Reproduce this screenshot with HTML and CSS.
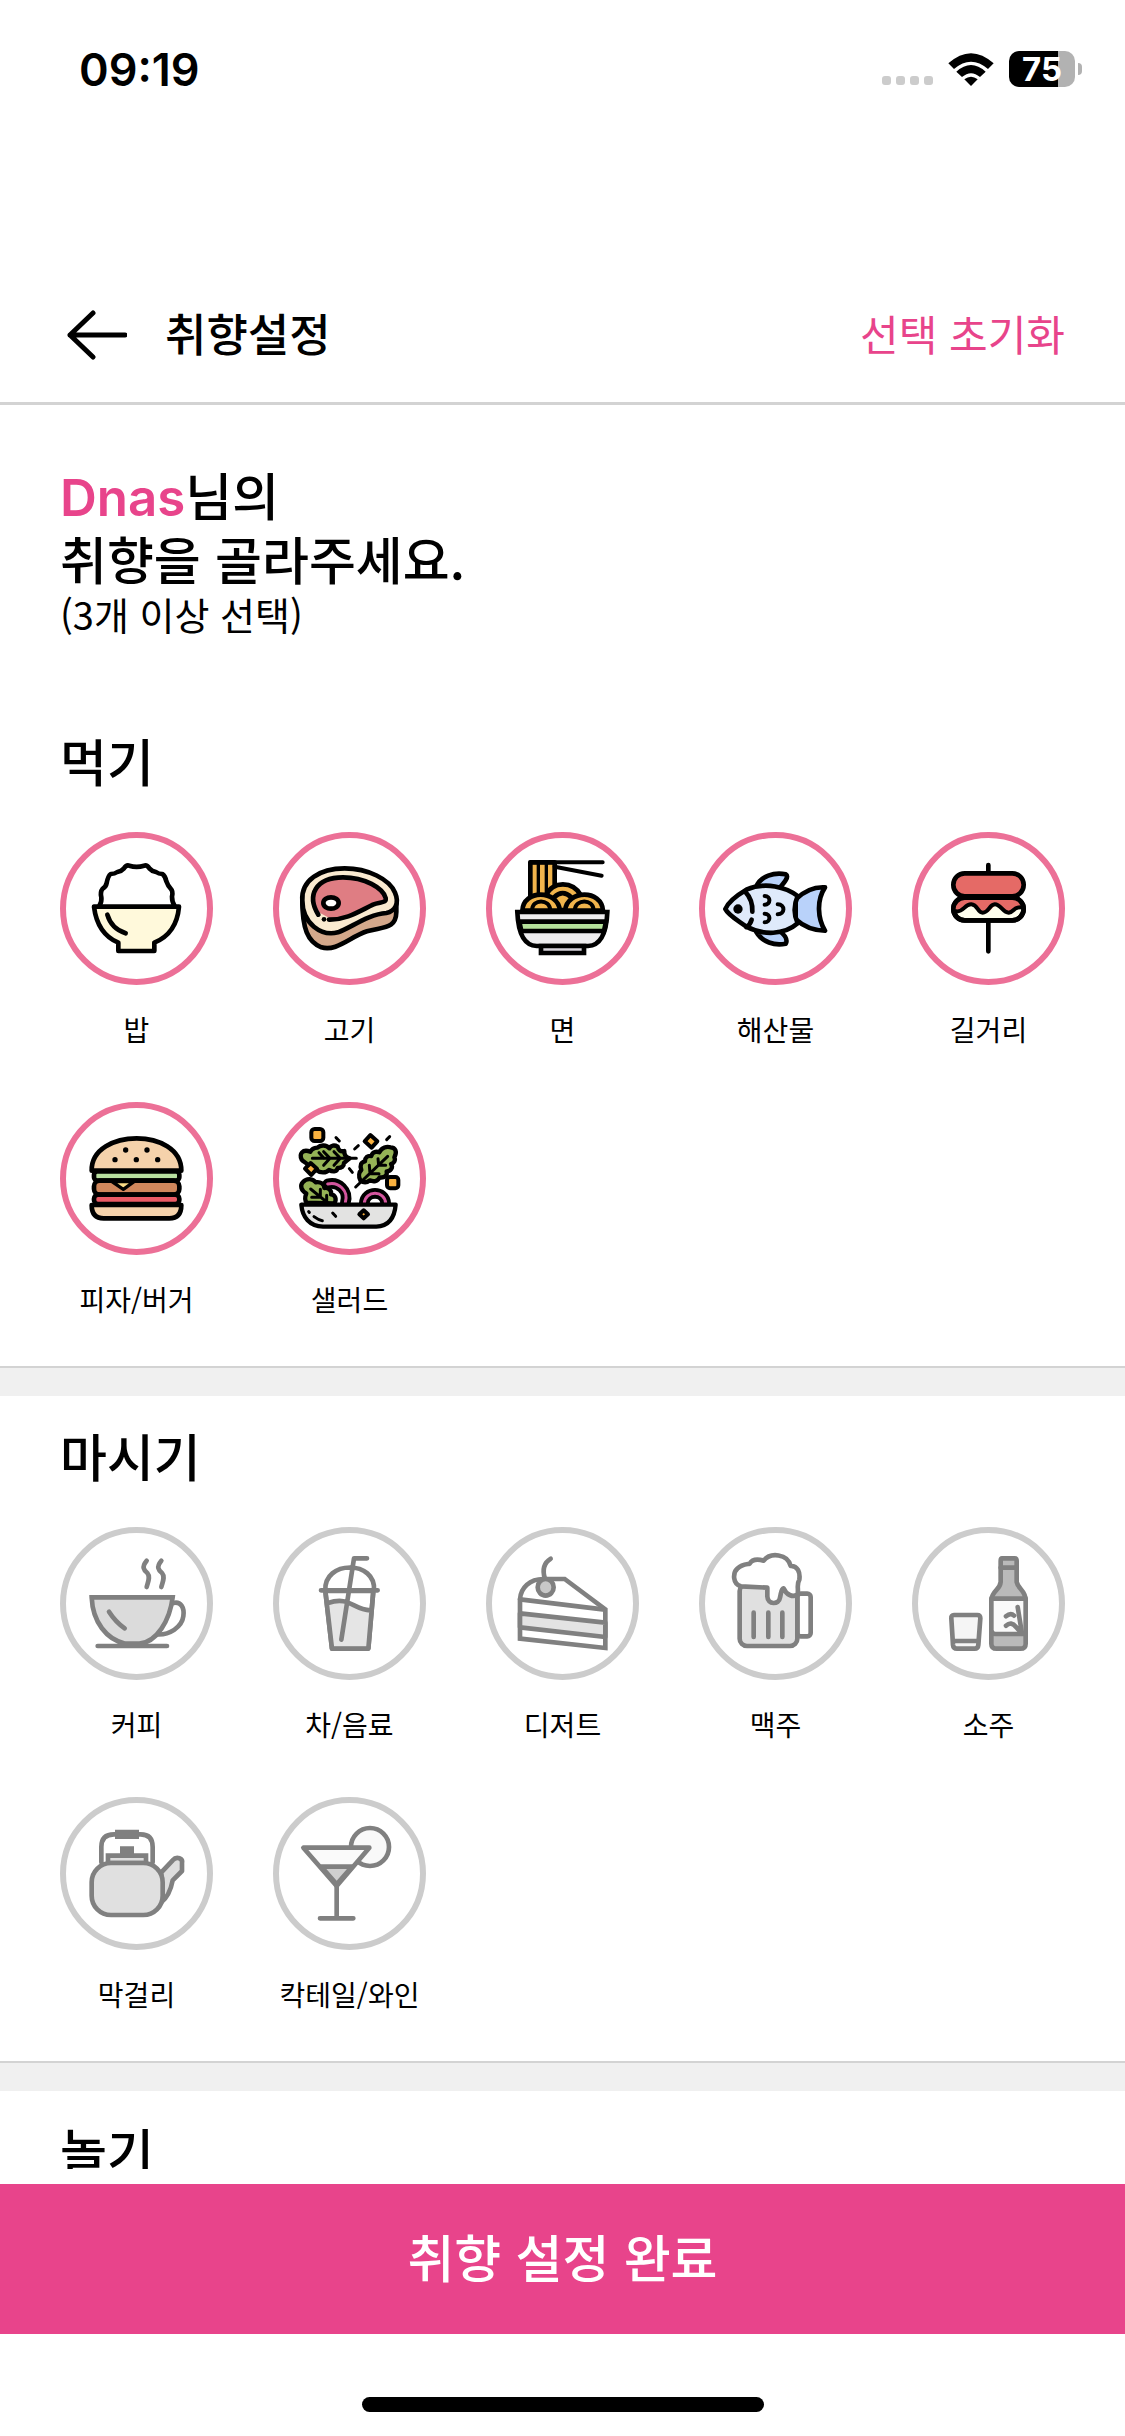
FILE: index.html
```
<!DOCTYPE html>
<html lang="ko">
<head>
  <meta charset="UTF-8">
  <meta name="viewport" content="width=device-width, initial-scale=1">
  <title>취향설정</title>
  <link rel="stylesheet" href="styles.css">
</head>
<body>

  <div class="status-bar">
    <span class="time">09:19</span>
    <div class="status-icons">
      <div class="signal"><i></i><i></i><i></i><i></i></div>
      <svg class="wifi" viewBox="0 0 138 99">
        <path d="M1 31 Q69 -30 137 31 L120 48 Q69 4 18 48 Z"/>
        <path d="M25 56 Q69 16 113 56 L96 72 Q69 49 42 72 Z"/>
        <path d="M49 79 Q69 63 89 79 L69 99 Z"/>
      </svg>
      <div class="battery"><span>75</span></div>
    </div>
  </div>

  <header class="header">
    <button class="back" type="button" aria-label="뒤로">
      <svg viewBox="0 0 60 50"><path d="M58 25H3M26 3L3 25l23 22"/></svg>
    </button>
    <h1>취향설정</h1>
    <button class="reset" type="button">선택 초기화</button>
  </header>

  <main class="content">
    <div class="intro">
      <h2><span class="nickname">Dnas</span>님의<br>취향을 골라주세요.</h2>
      <p>(3개 이상 선택)</p>
    </div>

    <section class="category">
      <h2>먹기</h2>
      <div class="items">
        <button class="item selected" type="button">
          <span class="ring">
            <svg viewBox="18 18 423 423">
              <path fill="#fff" d="M118 222Q126 208 124 196Q120 180 128 170Q138 164 140 153Q144 132 152 126Q164 126 172 120Q184 118 192 109Q199 98 208 101Q230 108 252 101Q261 98 268 109Q276 118 288 120Q296 126 307 126Q316 132 319 148Q324 162 332 170Q340 178 336 194Q336 210 344 222"/>
              <path fill="#fff9db" d="M102 224H357Q350 305 283 332V357H175V332Q112 305 102 224Z"/>
              <path fill="none" d="M142 248Q154 290 197 304"/>
            </svg>
          </span>
          <span class="label">밥</span>
        </button>
        <button class="item selected" type="button">
          <span class="ring">
            <svg viewBox="18 18 423 423">
              <path fill="#d4a88b" d="M88 205C88 290 104 330 145 346C190 360 230 315 282 298C330 284 369 292 370 240V205Z"/>
              <path fill="#faead0" d="M88 205C84 145 140 109 215 109C285 109 350 142 366 182C380 215 366 238 340 243C285 247 235 287 195 301C145 314 88 275 88 205Z"/>
              <path fill="#df7d83" stroke="none" d="M140 242C105 195 125 136 210 136C270 136 330 165 341 198C344 215 325 210 305 218C265 235 225 262 180 264Z"/>
              <path fill="none" d="M136 248C100 190 128 136 210 136C275 136 330 168 338 198C341 214 322 209 300 218C258 238 220 264 168 263"/>
              <ellipse cx="174" cy="213" rx="23" ry="17" fill="#fff"/>
              <circle class="solid" cx="153" cy="262" r="7"/>
            </svg>
          </span>
          <span class="label">고기</span>
        </button>
        <button class="item selected" type="button">
          <span class="ring">
            <svg viewBox="18 18 423 423">
              <path fill="#f1b44c" d="M133 91H206V200H133Z"/>
              <path fill="none" stroke-width="10" d="M157 91V200M181 91V200"/>
              <path fill="none" stroke-width="12" d="M133 91H350M206 104L347 131"/>
              <path fill="#f1b44c" d="M180 190C200 146 260 146 285 190L250 234H215Z"/>
              <path fill="none" d="M204 196Q230 170 256 196"/>
              <path fill="#f1b44c" d="M109 236C112 172 215 172 222 236ZM237 236C244 172 347 172 351 236Z"/>
              <path fill="none" stroke-width="12" d="M138 234C140 200 190 200 193 234M266 234C270 200 320 200 323 234"/>
              <path fill="#eeedef" stroke-linejoin="miter" d="M94 240H364Q360 340 306 342H152Q98 340 94 240Z"/>
              <path fill="#b4e19a" d="M100 269H360L354 297H106Z"/>
              <path fill="#d9d5dc" stroke-linejoin="miter" d="M165 342H294V363H165Z"/>
            </svg>
          </span>
          <span class="label">면</span>
        </button>
        <button class="item selected" type="button">
          <span class="ring">
            <svg viewBox="18 18 423 423">
              <path fill="#b9d2fa" d="M172 164C184 132 226 120 260 127C272 134 254 154 242 168ZM172 300C190 330 226 342 260 335C268 322 254 306 240 296ZM290 202C315 178 345 164 378 166C352 205 356 260 378 296C345 296 314 284 290 262Z"/>
              <path fill="#dfeafb" d="M79 231C88 208 120 186 142 173C200 148 262 166 296 192C284 220 284 248 296 274C255 310 192 310 142 284C118 266 88 250 79 231Z"/>
              <path fill="none" d="M138 178Q162 204 160 239M158 263Q154 278 142 285"/>
              <path fill="none" stroke-width="12" d="M197 192C216 192 216 218 197 218M236 217C260 217 258 247 236 247M197 245C216 245 216 271 197 271"/>
              <circle class="solid" cx="117" cy="231" r="14"/>
            </svg>
          </span>
          <span class="label">해산물</span>
        </button>
        <button class="item selected" type="button">
          <span class="ring">
            <svg viewBox="18 18 423 423">
              <path fill="none" d="M229 99V120M229 268V358"/>
              <rect x="124" y="124" width="211" height="69" rx="34" fill="#e56a66"/>
              <rect x="124" y="197" width="211" height="68" rx="34" fill="#fefeed"/>
              <path fill="#e56a66" stroke="none" d="M128 236C122 212 138 200 158 200H302C326 200 338 212 332 230C320 222 310 222 300 234Q285 252 266 228Q252 212 236 234Q222 252 200 228Q186 212 170 222Q154 236 132 238Z"/>
              <path fill="none" stroke-width="12" d="M132 238C154 242 158 216 178 217C198 218 196 242 212 242C230 242 232 218 248 217C266 216 272 242 290 242C308 240 304 222 332 226M146 197H312"/>
              <rect x="124" y="197" width="211" height="68" rx="34" fill="none"/>
            </svg>
          </span>
          <span class="label">길거리</span>
        </button>
        <button class="item selected" type="button">
          <span class="ring">
            <svg viewBox="18 18 423 423">
              <path fill="#f5d2ab" d="M95 206C94 140 165 109 230 109C295 109 364 140 364 206Z"/>
              <rect x="102" y="208" width="256" height="28" rx="10" fill="#b8e0a0"/>
              <rect x="102" y="236" width="256" height="42" rx="17" fill="#d0875c"/>
              <path fill="#fadb86" stroke-width="10" d="M156 239H222L190 262Z"/>
              <rect x="102" y="278" width="256" height="28" rx="12" fill="#ea5a65"/>
              <path fill="#f5d2ab" d="M95 309H364Q364 349 328 349H131Q95 349 95 309Z"/>
              <g class="solid"><circle cx="197" cy="144" r="8"/><circle cx="261" cy="144" r="8"/><circle cx="165" cy="173" r="8"/><circle cx="229" cy="173" r="8"/><circle cx="293" cy="173" r="8"/></g>
            </svg>
          </span>
          <span class="label">피자/버거</span>
        </button>
        <button class="item selected" type="button">
          <span class="ring">
            <svg viewBox="18 18 423 423">
              <g stroke-width="13">
                <path fill="#95b356" d="M230 169C218 166 213 158 214 147C202 150 196 144 194 134C184 128 174 130 169 139C160 128 143 128 133 137C122 138 116 141 112 149C88 140 78 156 86 173C92 181 106 184 104 192C112 204 122 204 130 204C142 214 160 213 168 204C182 212 192 208 194 198C206 199 213 192 213 183C219 178 224 174 230 169Z"/>
                <path fill="none" stroke-width="9" d="M118 169H250M152 149L171 169L152 190M183 149L202 169L183 190M138 152L153 169"/>
                <path fill="#95b356" d="M262 235C256 223 258 210 265 204C260 190 264 180 276 178C276 166 284 160 295 162C298 150 308 147 319 151C326 136 342 132 352 136C368 136 373 150 364 166C369 176 362 183 354 186C362 197 352 208 341 208C344 222 334 228 320 226C315 239 301 240 290 235C281 243 273 244 262 235Z"/>
                <path fill="none" stroke-width="9" d="M248 255L344 163M315 170L317 190H338M289 190L291 215H318"/>
                <path fill="none" stroke-width="32" d="M164 246C196 238 228 265 217 302M274 304C276 264 336 264 338 304"/>
                <path fill="none" stroke="#d4559e" stroke-width="9" d="M164 246C196 238 228 265 217 302M274 304C276 264 336 264 338 304"/>
                <path fill="#95b356" d="M101 302C94 294 96 284 100 274C84 266 80 250 90 240C102 227 120 230 128 241C142 238 154 246 154 258C168 256 177 267 174 277C187 278 192 292 184 304Z"/>
                <path fill="none" stroke-width="9" d="M113 261L166 304M142 262V286H116M161 280V300"/>
                <path fill="#e3e3e2" d="M85 308H368C364 355 342 373 310 374H150C110 373 88 346 85 308Z"/>
              </g>
              <g fill="#f9b13f" stroke-width="12">
                <rect x="115" y="81" width="36" height="36" rx="10"/>
                <path d="M292 99L313 118L296 137L275 118ZM113 183L132 200L115 219L96 200Z"/>
                <rect x="342" y="225" width="34" height="34" rx="9"/>
                <path d="M272 325L285 337L272 349L259 337Z"/>
              </g>
              <path fill="none" stroke-width="9" d="M189 107L199 117M245 141L256 131M229 200L238 211M341 113L350 104M179 333L188 343M107 329L109 331M123 344Q136 354 148 356"/>
            </svg>
          </span>
          <span class="label">샐러드</span>
        </button>
      </div>
    </section>

    <section class="category">
      <h2>마시기</h2>
      <div class="items">
        <button class="item" type="button">
          <span class="ring">
            <svg viewBox="18 18 423 423">
              <path fill="none" d="M340 228C362 222 374 242 370 268C366 300 328 326 288 322"/>
              <path fill="#dbdbdb" stroke-linejoin="miter" d="M95 211H338C330 280 290 346 238 350H196C140 338 98 285 95 211Z"/>
              <path fill="none" d="M113 357H321M147 254Q166 284 194 304M260 101C244 120 252 130 262 138C272 150 264 164 260 180M304 101C288 120 296 130 306 138C316 150 308 164 304 180"/>
            </svg>
          </span>
          <span class="label">커피</span>
        </button>
        <button class="item" type="button">
          <span class="ring">
            <svg viewBox="18 18 423 423">
              <path fill="#fff" d="M157 192H301L286 365H177Z"/>
              <path fill="#e5e5e5" stroke="none" d="M166 232C210 210 240 250 292 250L282 359H181Z"/>
              <path fill="none" d="M157 192C150 98 312 98 303 192M144 190H314M165 228C230 206 240 248 292 250M157 192L177 365H286L301 192M205 338L243 94H282"/>
            </svg>
          </span>
          <span class="label">차/음료</span>
        </button>
        <button class="item" type="button">
          <span class="ring">
            <svg viewBox="18 18 423 423">
              <path fill="#fff" stroke-linejoin="miter" d="M102 217C104 182 132 156 172 156H236L358 247V363L102 335Z"/>
              <path fill="#e3e3e3" d="M102 259L358 287V330L102 301Z"/>
              <path fill="none" d="M102 217L350 247M194 95C166 112 172 140 177 156"/>
              <ellipse cx="179" cy="181" rx="24" ry="25" fill="#c8c8c8"/>
            </svg>
          </span>
          <span class="label">디저트</span>
        </button>
        <button class="item" type="button">
          <span class="ring">
            <svg viewBox="18 18 423 423">
              <rect x="295" y="200" width="40" height="128" rx="10" fill="#fff"/>
              <rect x="122" y="170" width="173" height="187" rx="22" fill="#e0e0e0"/>
              <path fill="#fff" d="M126 178C101 172 100 138 116 124C128 112 142 112 152 110C160 96 176 96 194 101C214 75 266 80 275 117C296 116 304 136 301 158C292 172 299 185 296 200C284 214 262 204 254 184C246 186 247 196 243 212C240 234 206 234 205 208V182Z"/>
              <path fill="none" d="M164 257V330M208 257V330M250 257V330"/>
            </svg>
          </span>
          <span class="label">맥주</span>
        </button>
        <button class="item" type="button">
          <span class="ring">
            <svg viewBox="18 18 423 423">
              <path fill="#f5f5f5" d="M126 264H196Q205 264 205 274L199 354Q198 365 188 365H135Q124 365 123 354L118 274Q117 264 126 264Z"/>
              <path fill="none" d="M125 342H198"/>
              <path fill="#bababa" d="M270 94H308Q314 94 314 102V165C318 186 341 190 341 220V350Q341 365 325 365H254Q238 365 238 350V220C240 190 264 190 266 165V102Q266 94 270 94Z"/>
              <path fill="#fafafa" d="M238 215H341V321H250Q238 321 238 308Z"/>
              <path fill="none" d="M266 122H314M317 240L330 320L312 300M282 268Q296 256 306 266M282 296Q298 282 312 300"/>
            </svg>
          </span>
          <span class="label">소주</span>
        </button>
        <button class="item" type="button">
          <span class="ring">
            <svg viewBox="18 18 423 423">
              <path fill="#dedede" d="M304 226L338 190C350 176 370 184 366 200V222L338 250C332 282 320 304 302 318Z"/>
              <path fill="none" d="M124 196V150Q124 112 162 112H242Q278 112 278 150V196"/>
              <path fill="#dedede" stroke-linejoin="miter" d="M144 198V176H258V198Z"/>
              <rect x="95" y="198" width="213" height="156" rx="58" fill="#e0e0e0"/>
              <path class="solid" d="M165 98H237V126H165ZM180 148H222V176H180Z"/>
            </svg>
          </span>
          <span class="label">막걸리</span>
        </button>
        <button class="item" type="button">
          <span class="ring">
            <svg viewBox="18 18 423 423">
              <circle cx="291" cy="150" r="57" fill="#f9f9f9"/>
              <path fill="#fafafa" d="M91 152H289L191 267Z"/>
              <path fill="#cfcfcf" d="M145 209H237L191 262Z"/>
              <path fill="none" d="M191 267V364M141 364H241"/>
            </svg>
          </span>
          <span class="label">칵테일/와인</span>
        </button>
      </div>
    </section>

    <section class="category">
      <h2>놀기</h2>
    </section>
  </main>

  <footer class="footer">
    <button class="submit" type="button">취향 설정 완료</button>
    <div class="home-indicator"></div>
  </footer>

  <script>
    document.querySelectorAll(".item").forEach(item => {
      item.addEventListener("click", () => item.classList.toggle("selected"));
    });

    document.querySelector(".reset").addEventListener("click", () => {
      document.querySelectorAll(".item").forEach(item => item.classList.remove("selected"));
    });
  </script>
</body>
</html>
```
FILE: styles.css
```
* {
  box-sizing: border-box;
}
body {
  display: flex;
  flex-direction: column;
  height: 100vh;
  margin: 0;
  font-family: "Noto Sans CJK KR", sans-serif;
  background: #fff;
  color: #000;
}
h1, h2, p {
  margin: 0;
}
button {
  padding: 0;
  border: none;
  background: none;
  font-family: inherit;
  color: inherit;
  cursor: pointer;
}
svg {
  display: block;
}

/* status bar */
.status-bar {
  display: flex;
  flex-shrink: 0;
  align-items: center;
  justify-content: space-between;
  height: 138px;
  padding: 0 50px 0 79px;
  font-family: Inter, sans-serif;
}
.time {
  font-size: 45px;
  font-weight: 600;
}
.status-icons {
  display: flex;
  align-items: center;
  gap: 15px;
}
.signal {
  display: flex;
  gap: 5px;
  padding-top: 23px;
}
.signal i {
  width: 9px;
  height: 9px;
  border-radius: 3px;
  background: #ccc;
}
.wifi {
  width: 46px;
  height: 33px;
}
.battery {
  position: relative;
  width: 66px;
  height: 36px;
  border-radius: 10px;
  background: linear-gradient(to right, #000 75%, #b2b2b2 75%);
  color: #fff;
  font-size: 33px;
  font-weight: 700;
  line-height: 36px;
  text-align: center;
}
.battery::after {
  content: "";
  position: absolute;
  top: 12px;
  right: -7px;
  width: 4px;
  height: 12px;
  border-radius: 0 4px 4px 0;
  background: #b2b2b2;
}

/* header */
.header {
  display: flex;
  flex-shrink: 0;
  align-items: center;
  height: 138px;
  margin-top: 129px;
  padding: 0 60px 0 67px;
  border-bottom: 3px solid #d3d3d3;
}
.back svg {
  width: 60px;
  height: 50px;
  fill: none;
  stroke: #000;
  stroke-width: 5;
  stroke-linecap: round;
  stroke-linejoin: round;
}
.header h1 {
  margin-left: 38px;
  padding-bottom: 4px;
  font-size: 45px;
  font-weight: 500;
}
.reset {
  margin-left: auto;
  padding-bottom: 4px;
  color: #e8448b;
  font-size: 42px;
}

/* content */
.content {
  flex: 1;
  min-height: 0;
  overflow: hidden;
}
.intro {
  padding: 57px 60px 63px;
}
.intro h2, .category h2 {
  font-size: 51px;
  font-weight: 500;
  line-height: 64px;
}
.nickname {
  font-family: Inter, sans-serif;
  font-weight: 600;
  line-height: 1;
  color: #e8448b;
}
.intro p {
  font-size: 38px;
  line-height: 48px;
}
.category {
  padding: 27px 60px 49px;
}
.category + .category {
  position: relative;
  padding-top: 57px;
}
.category + .category::before {
  content: "";
  position: absolute;
  top: 0;
  left: 0;
  right: 0;
  height: 28px;
  border-top: 2px solid #d3d3d3;
  background: #f0f0f0;
}
.items {
  display: grid;
  grid-template-columns: repeat(5, 153px);
  justify-content: space-between;
  row-gap: 55px;
  margin-top: 40px;
}
.item {
  display: flex;
  flex-direction: column;
  align-items: center;
  gap: 26px;
}
.ring {
  width: 153px;
  height: 153px;
  border: 6px solid #ccc;
  border-radius: 50%;
}
.selected .ring {
  border-color: #ec7097;
}
.ring svg {
  width: 100%;
  height: 100%;
  stroke: #808080;
  stroke-width: 14;
  stroke-linecap: round;
  stroke-linejoin: round;
}
.selected .ring svg {
  stroke: #000;
}
.solid {
  fill: #808080;
  stroke: none;
}
.selected .solid {
  fill: #000;
}
.label {
  font-size: 28px;
  line-height: 36px;
  white-space: nowrap;
}

/* bottom */
.footer {
  flex-shrink: 0;
  height: 267px;
  padding-top: 15px;
}
.submit {
  display: block;
  width: 100%;
  height: 150px;
  padding-bottom: 6px;
  background: #e8448b;
  color: #fff;
  font-size: 51px;
  font-weight: 500;
}
.home-indicator {
  width: 402px;
  height: 15px;
  margin: 63px auto 0;
  border-radius: 8px;
  background: #000;
}
```
